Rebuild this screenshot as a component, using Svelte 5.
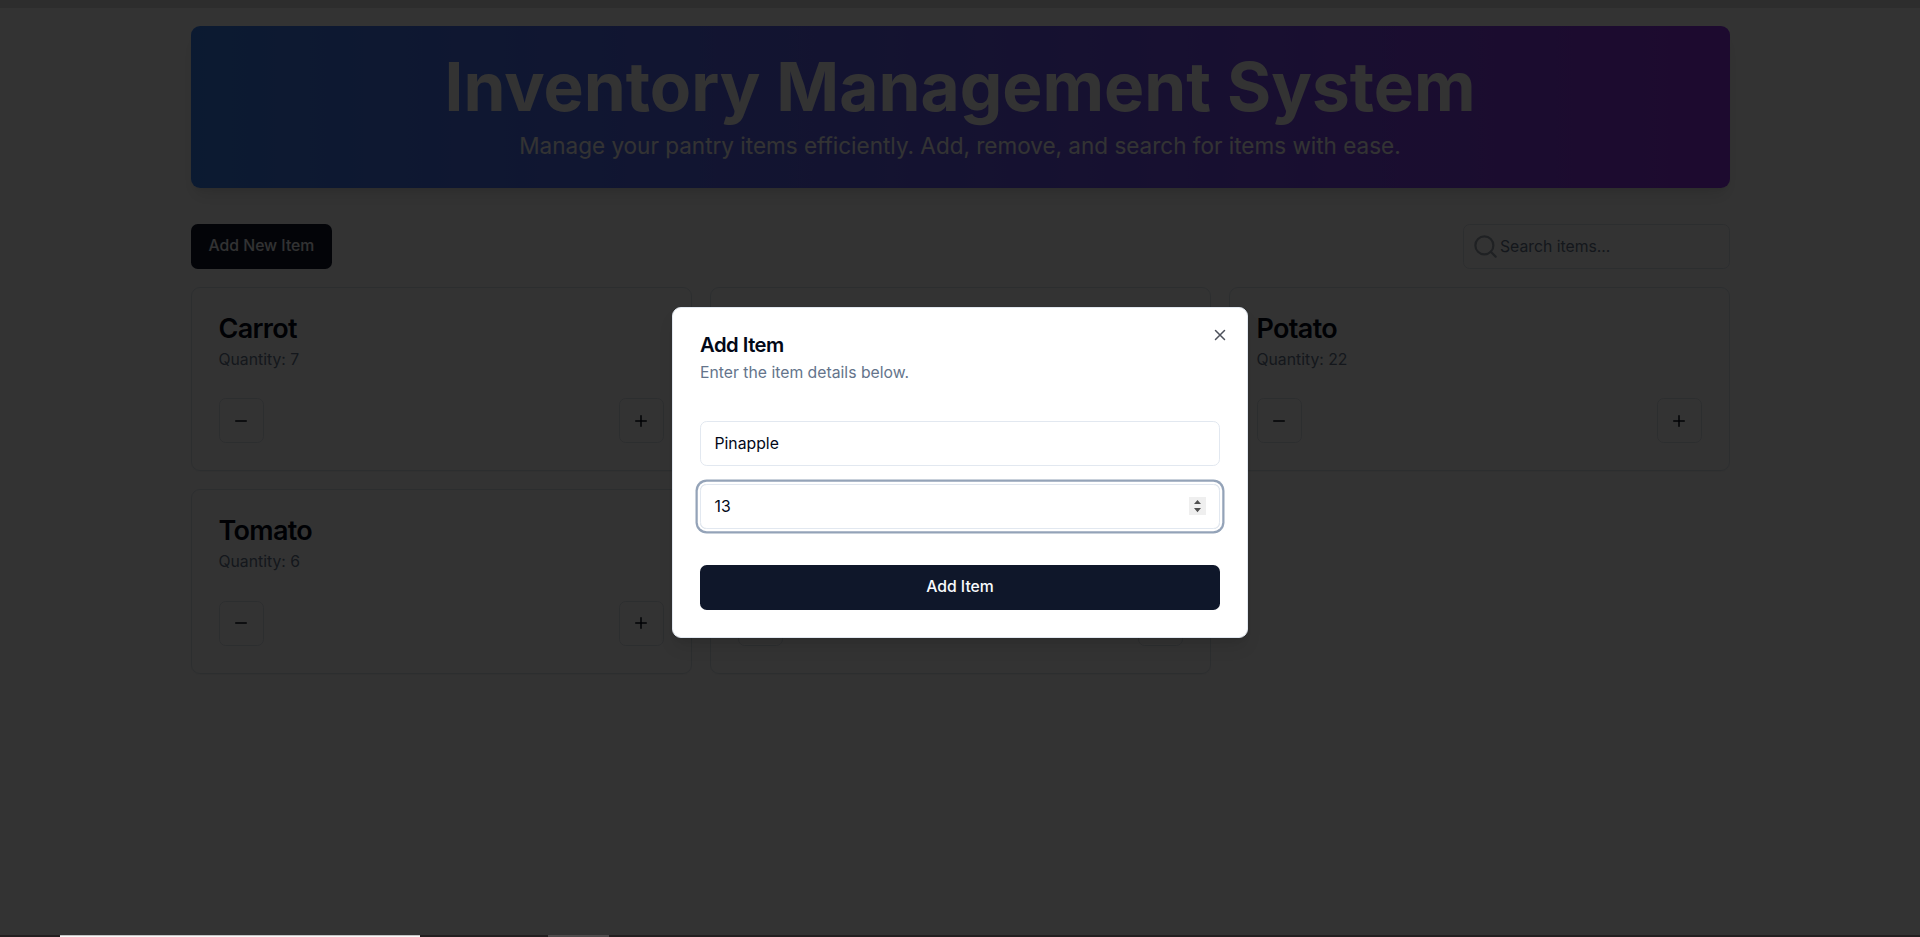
<script>
  const items = [
    { name: 'Carrot', quantity: 7 },
    { name: '', quantity: null },
    { name: 'Potato', quantity: 22 },
    { name: 'Tomato', quantity: 6 },
    { name: '', quantity: null },
  ];
</script>

<div class="screen">
  <div class="top-strip"></div>
  <main class="container">
    <header class="banner">
      <h1>Inventory Management System</h1>
      <p>Manage your pantry items efficiently. Add, remove, and search for items with ease.</p>
    </header>

    <div class="toolbar">
      <button class="primary">Add New Item</button>
      <div class="search">
        <svg viewBox="0 0 24 24" fill="none" stroke="currentColor" stroke-width="2" stroke-linecap="round" stroke-linejoin="round">
          <circle cx="11" cy="11" r="8" />
          <path d="m21 21-4.3-4.3" />
        </svg>
        <span>Search items...</span>
      </div>
    </div>

    <section class="grid">
      {#each items as item}
        <article class="card">
          <h3>{item.name}</h3>
          <p>{item.quantity === null ? '' : `Quantity: ${item.quantity}`}</p>
          <div class="actions">
            <button class="icon-button" aria-label="Decrease">
              <svg viewBox="0 0 24 24" fill="none" stroke="currentColor" stroke-width="2" stroke-linecap="round"><path d="M5 12h14" /></svg>
            </button>
            <button class="icon-button" aria-label="Increase">
              <svg viewBox="0 0 24 24" fill="none" stroke="currentColor" stroke-width="2" stroke-linecap="round"><path d="M5 12h14M12 5v14" /></svg>
            </button>
          </div>
        </article>
      {/each}
    </section>
  </main>

  <div class="overlay">
    <div class="dialog" role="dialog" aria-label="Add Item">
      <div class="dialog-head">
        <h2>Add Item</h2>
        <p>Enter the item details below.</p>
      </div>
      <div class="fields">
        <div class="field"><span>Pinapple</span></div>
        <div class="field focused">
          <span>13</span>
          <svg class="spinner" viewBox="0 0 17 18">
            <rect width="17" height="18" fill="#efefef" />
            <path d="M8.5 3 12 7H5zM5 11h7l-3.5 4.2z" fill="#505050" />
          </svg>
        </div>
      </div>
      <button class="primary">Add Item</button>
      <button class="close" aria-label="Close">
        <svg viewBox="0 0 24 24" fill="none" stroke="currentColor" stroke-width="2" stroke-linecap="round" stroke-linejoin="round"><path d="M18 6 6 18M6 6l12 12" /></svg>
      </button>
    </div>
  </div>

  <footer class="taskbar">
    <div class="task active"></div>
    <div class="task"></div>
  </footer>
</div>

<style>
  :global(html) {
    font-size: 18px;
  }
  :global(body) {
    margin: 0;
    overflow: hidden;
    background: #fff;
  }
  .screen {
    position: relative;
    display: flex;
    flex-direction: column;
    height: 937px;
    overflow: hidden;
    font-family: Inter, sans-serif;
    color: #020817;
    line-height: 1.5;
  }
  .screen * {
    box-sizing: border-box;
  }
  h1, h2, h3, p {
    margin: 0;
  }
  button {
    margin: 0;
    padding: 0;
    font: inherit;
    color: inherit;
    background: none;
    border: 0;
  }
  svg {
    display: block;
    flex: none;
  }
  .top-strip {
    height: 8px;
    background: #e1e1e1;
  }
  .container {
    flex: 1;
    width: 87.5rem;
    margin: 0 auto;
    padding: 1rem;
  }
  .banner {
    padding: 1.5rem;
    border-radius: 0.5rem;
    background: linear-gradient(to right, #3b82f6, #9333ea);
    color: #fff;
    text-align: center;
    box-shadow: 0 0.625rem 0.9375rem -0.1875rem rgba(0, 0, 0, 0.1), 0 0.25rem 0.375rem -0.25rem rgba(0, 0, 0, 0.1);
  }
  .banner h1 {
    font-size: 3.75rem;
    line-height: 1;
    font-weight: 700;
  }
  .banner p {
    margin-top: 0.5rem;
    font-size: 1.25rem;
    line-height: 1.75rem;
  }
  .toolbar {
    display: flex;
    justify-content: space-between;
    margin: 2rem 0 1rem;
  }
  .primary {
    height: 2.5rem;
    padding: 0 1rem;
    border-radius: 0.375rem;
    background: #0f172a;
    color: #f8fafc;
    font-size: 0.875rem;
    line-height: 1.25rem;
    font-weight: 500;
    white-space: nowrap;
  }
  .search {
    display: flex;
    align-items: center;
    gap: 1.4px;
    width: 267px;
    height: 2.5rem;
    padding-left: 0.45rem;
    border: 1px solid #dde4ec;
    border-radius: 0.375rem;
    color: #64748b;
    font-size: 0.875rem;
  }
  .search svg {
    width: 1.5rem;
    height: 1.5rem;
    color: #9ca3af;
  }
  .grid {
    display: grid;
    grid-template-columns: repeat(3, 1fr);
    gap: 1rem;
  }
  .card {
    padding: 1.5rem;
    border: 1px solid #dde4ec;
    border-radius: 0.5rem;
    box-shadow: 0 1px 2px rgba(0, 0, 0, 0.05);
  }
  .card h3 {
    height: 1.5rem;
    font-size: 1.5rem;
    line-height: 1;
    font-weight: 600;
    letter-spacing: -0.025em;
  }
  .card p {
    height: 1.25rem;
    margin-top: 0.375rem;
    color: #64748b;
    font-size: 0.875rem;
    line-height: 1.25rem;
  }
  .actions {
    display: flex;
    justify-content: space-between;
    margin-top: 1.5rem;
  }
  .icon-button {
    display: grid;
    place-items: center;
    width: 2.5rem;
    height: 2.5rem;
    border: 1px solid #dde4ec;
    border-radius: 0.375rem;
  }
  .icon-button svg,
  .close svg {
    width: 1rem;
    height: 1rem;
  }
  .overlay {
    position: absolute;
    inset: 0;
    display: flex;
    align-items: center;
    justify-content: center;
    padding-top: 7.5px;
    background: rgba(0, 0, 0, 0.8);
  }
  .dialog {
    position: relative;
    display: grid;
    gap: 1rem;
    width: 32rem;
    padding: 1.5rem;
    border: 1px solid #e2e8f0;
    border-radius: 0.5rem;
    background: #fff;
    box-shadow: 0 0.625rem 0.9375rem -0.1875rem rgba(0, 0, 0, 0.1), 0 0.25rem 0.375rem -0.25rem rgba(0, 0, 0, 0.1);
  }
  .dialog h2 {
    font-size: 1.125rem;
    line-height: 1;
    font-weight: 600;
    letter-spacing: -0.025em;
  }
  .dialog-head {
    display: grid;
    gap: 0.375rem;
  }
  .dialog-head h2 {
    height: 1.125rem;
  }
  .dialog-head p {
    color: #64748b;
    font-size: 0.875rem;
    line-height: 1.25rem;
  }
  .fields {
    display: grid;
    gap: 1rem;
    padding: 1rem 0;
  }
  .field {
    display: flex;
    align-items: center;
    justify-content: space-between;
    height: 2.5rem;
    padding: 0 0.75rem;
    border: 1px solid #e2e8f0;
    border-radius: 0.375rem;
    font-size: 0.875rem;
  }
  .field span {
    padding-top: 2px;
  }
  .focused {
    box-shadow: 0 0 0 0.125rem #fff, 0 0 0 0.25rem #94a3b8;
  }
  .spinner {
    width: 17px;
    height: 18px;
  }
  .close {
    position: absolute;
    top: 1rem;
    right: 1rem;
    opacity: 0.7;
  }
  .taskbar {
    position: absolute;
    inset: auto 0 0;
    display: flex;
    gap: 128px;
    height: 2px;
    padding-left: 60px;
    background: #231f20;
  }
  .task {
    width: 61px;
    background: #4f4b4c;
  }
  .task.active {
    width: 360px;
    background: #f9f7f7;
    border-top: 1px solid #c6c4c4;
  }
</style>
